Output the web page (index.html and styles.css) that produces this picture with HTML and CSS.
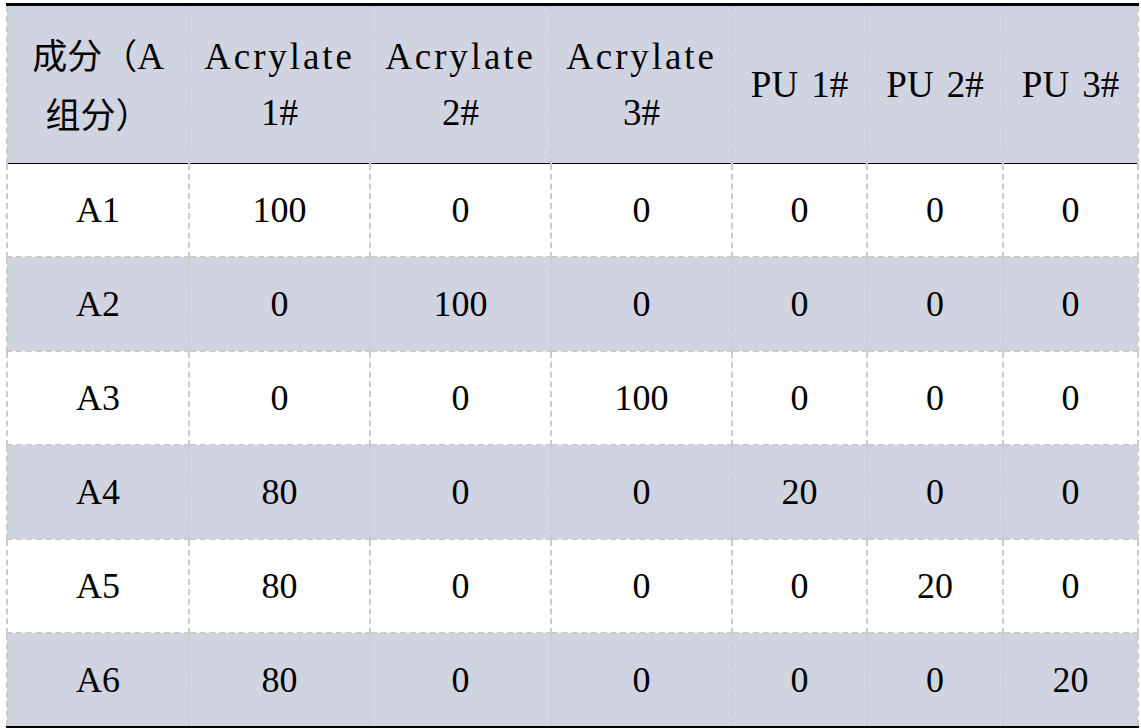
FILE: index.html
```html
<!DOCTYPE html>
<html lang="zh-CN">
<head>
<meta charset="utf-8">
<title>A组分成分表</title>
<link rel="stylesheet" href="styles.css">
</head>
<body>
<table class="comp-table">
  <colgroup>
    <col class="c-name">
    <col class="c-wide">
    <col class="c-wide">
    <col class="c-wide">
    <col class="c-narrow">
    <col class="c-narrow2">
    <col class="c-narrow">
  </colgroup>
  <thead>
    <tr class="head-row">
      <th><span class="cjk">成分（</span>A<br><span class="cjk">组分）</span></th>
      <th><span class="wide-word">Acrylate</span><br>1#</th>
      <th><span class="wide-word">Acrylate</span><br>2#</th>
      <th><span class="wide-word">Acrylate</span><br>3#</th>
      <th>PU<span class="gap"></span>1#</th>
      <th>PU<span class="gap"></span>2#</th>
      <th>PU<span class="gap"></span>3#</th>
    </tr>
  </thead>
  <tbody>
    <tr class="row-light"><td>A1</td><td>100</td><td>0</td><td>0</td><td>0</td><td>0</td><td>0</td></tr>
    <tr class="row-shade"><td>A2</td><td>0</td><td>100</td><td>0</td><td>0</td><td>0</td><td>0</td></tr>
    <tr class="row-light"><td>A3</td><td>0</td><td>0</td><td>100</td><td>0</td><td>0</td><td>0</td></tr>
    <tr class="row-shade"><td>A4</td><td>80</td><td>0</td><td>0</td><td>20</td><td>0</td><td>0</td></tr>
    <tr class="row-light"><td>A5</td><td>80</td><td>0</td><td>0</td><td>0</td><td>20</td><td>0</td></tr>
    <tr class="row-shade last"><td>A6</td><td>80</td><td>0</td><td>0</td><td>0</td><td>0</td><td>20</td></tr>
  </tbody>
</table>
</body>
</html>
```
FILE: styles.css
```css
html, body {
  margin: 0;
  padding: 0;
  background: #ffffff;
}

body {
  padding: 3px 0 0 6px;
  font-family: "Liberation Serif", "DejaVu Serif", serif;
  color: #000000;
}

.comp-table {
  border-collapse: collapse;
  table-layout: fixed;
  width: 1131px;
  font-family: "Liberation Serif", "DejaVu Serif", serif;
  font-size: 36px;
}

.cjk {
  font-family: "Noto Sans CJK SC", sans-serif;
  font-size: 35px;
}

.c-name { width: 182px; }
.c-wide { width: 181px; }
.c-narrow { width: 135px; }
.c-narrow2 { width: 136px; }

.comp-table th,
.comp-table td {
  padding: 0;
  text-align: center;
  vertical-align: middle;
  border-left: 2px dashed #cccccc;
  border-right: 2px dashed #cccccc;
  font-weight: normal;
}

.head-row th {
  background: #d0d4e0;
  height: 157px;
  font-size: 37px;
  line-height: 56px;
  border-top: 3px solid #000000;
  border-bottom: 1px solid #000000;
  white-space: nowrap;
}

.wide-word {
  letter-spacing: 2.9px;
}

.gap {
  display: inline-block;
  width: 13px;
}

.comp-table td {
  height: 92px;
  line-height: 40px;
  border-bottom: 2px dashed #cccccc;
}

.row-light td {
  background: #ffffff;
}

.row-shade td {
  background: #d0d4e0;
}

.row-shade.last td {
  border-bottom: 5px solid #000000;
}
```
